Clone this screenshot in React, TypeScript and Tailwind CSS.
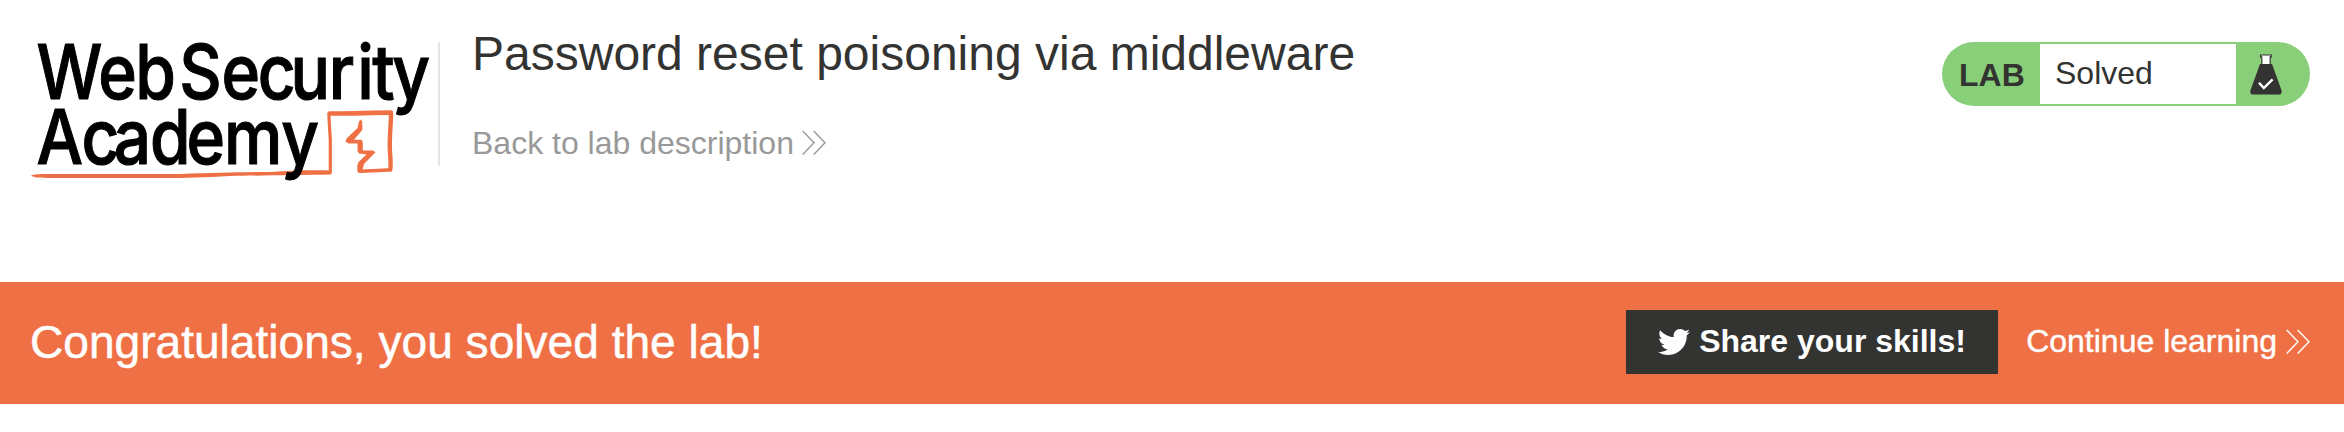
import { FaTwitter } from "react-icons/fa";

function AcademyLogo() {
  return (
    <svg
      width="410"
      height="152"
      viewBox="28 20 410 152"
      className="block shrink-0 overflow-visible"
      role="img"
    >
      <g fill="none" stroke="#f07045" strokeLinecap="round" strokeLinejoin="round">
        <path
          d="M31 175.5 C34 174 42 174 55 174 H180 C215 173 245 172 270 172 C295 170 315 170 331 170.5 V174.5 C300 175 260 175.5 230 176 C205 177.5 185 178 165 178 H60 C42 178 34 178 31 175.5 Z"
          fill="#f07045"
          stroke="none"
        />
        <path d="M330.3 172.5 V140 C330 132 329 124 329 114" strokeWidth="3.2" />
        <path d="M329.6 113.5 C350 113.8 370 112.6 390.8 112.6" strokeWidth="4.6" />
        <path d="M391 113 C391 125 389.5 135 389.8 148 C390 156 391.2 162 390.3 169.5" strokeWidth="4.4" />
        <path d="M390.3 169.8 C380 170.5 370 171.3 359.5 171.2" strokeWidth="3.4" />
        <path
          d="M360.6 119.5 L362.3 121.5 V130 L354 139.7 H361.5 L362.8 142 V150.4 H373 L375.5 152.3 L364 164 L362 172 L357.3 171.5 L357.2 166 L358.5 162 L366.5 154.5 L359 153.5 L357.5 151 V143.5 H348.5 L345.5 141.5 L346.5 138.5 L357.5 128 L359 121.5 Z"
          fill="#f07045"
          stroke="none"
        />
      </g>
      <g
        transform="scale(0.87 1)"
        fontFamily="Inter, sans-serif"
        fontSize="75.5"
        fontWeight="500"
        fill="#000"
        stroke="#000"
        strokeWidth="1.1"
      >
        <text y="99.1" x="42 112.8 155.5 206 254.5 296.3 334 378 410.6 428 451">WebSecurity</text>
        <text y="164.1" x="42 93.8 130.9 172.5 214.5 257.5 323.3">Academy</text>
      </g>
    </svg>
  );
}

function Chevrons({ className }: { className: string }) {
  return (
    <svg width="24" height="26" viewBox="0 0 24 26" fill="none" stroke="currentColor" strokeWidth="1.4" className={className}>
      <path d="M0.7 1 L12 12.7 L0.7 24.5 M11.7 1 L23 12.7 L11.7 24.5" />
    </svg>
  );
}

function Flask() {
  return (
    <svg width="32" height="41" viewBox="0 0 32 41" className="block">
      <path d="M10 10 H22 L31.6 36.5 Q32.3 40.6 28.5 40.6 H3.5 Q-0.3 40.6 0.4 36.5 Z" fill="#333332" />
      <path d="M10.5 1 H21.5 V2.8 H20.2 V10.5 H11.8 V2.8 H10.5 Z" fill="#fff" stroke="#333332" strokeWidth="1.2" />
      <path d="M9 28.8 L13.8 34 L22.6 25.4" fill="none" stroke="#fff" strokeWidth="2.4" />
    </svg>
  );
}

function Header() {
  return (
    <header className="flex h-[282px] items-start pl-[28px] pr-[34px] pt-[20px]">
      <AcademyLogo />
      <div className="mt-[22px] h-[124px] w-[2px] shrink-0 bg-[#e5e5e5]" />
      <div className="ml-[32px] flex flex-col whitespace-nowrap">
        <h2 className="mt-[6px] text-[48px] leading-[56px] text-[#333332]">Password reset poisoning via middleware</h2>
        <a className="mt-[43px] flex text-[32px] leading-[36px] text-[#999]">
          Back to lab description
          <Chevrons className="ml-[8px] mt-[5px]" />
        </a>
      </div>
      <div className="ml-auto mt-[22px] flex h-[64px] w-[368px] overflow-hidden rounded-[32px] bg-[#89cf79] py-[2px] text-[32px] leading-[36px] text-[#333332]">
        <div className="w-[98px] pl-[17px] pt-[13px] font-bold">LAB</div>
        <div className="w-[196px] bg-white pl-[15px] pt-[11px]">Solved</div>
        <div className="pl-[14px] pt-[10px]">
          <Flask />
        </div>
      </div>
    </header>
  );
}

function Banner() {
  return (
    <section className="flex h-[122px] items-start whitespace-nowrap bg-[#f07045] pl-[30px] pr-[34px] text-white">
      <h3 className="pt-[32px] text-[46.1px] leading-[56px] [-webkit-text-stroke:0.5px_#fff]">
        Congratulations, you solved the lab!
      </h3>
      <a className="ml-auto mt-[28px] flex h-[64px] w-[372px] bg-[#333332] pl-[32px] pt-[13px] text-[32px] font-bold leading-[36px]">
        <FaTwitter className="mr-[9px] mt-[3px] h-[32px] w-[32px]" />
        Share your skills!
      </a>
      <a className="ml-[28px] flex pt-[41px] text-[32px] leading-[36px] [-webkit-text-stroke:0.4px_#fff]">
        Continue learning
        <Chevrons className="ml-[9px] mt-[6px]" />
      </a>
    </section>
  );
}

export default function App() {
  return (
    <main className="min-h-[432px] w-full bg-white font-['Liberation_Sans',Arial,sans-serif]">
      <Header />
      <Banner />
    </main>
  );
}
